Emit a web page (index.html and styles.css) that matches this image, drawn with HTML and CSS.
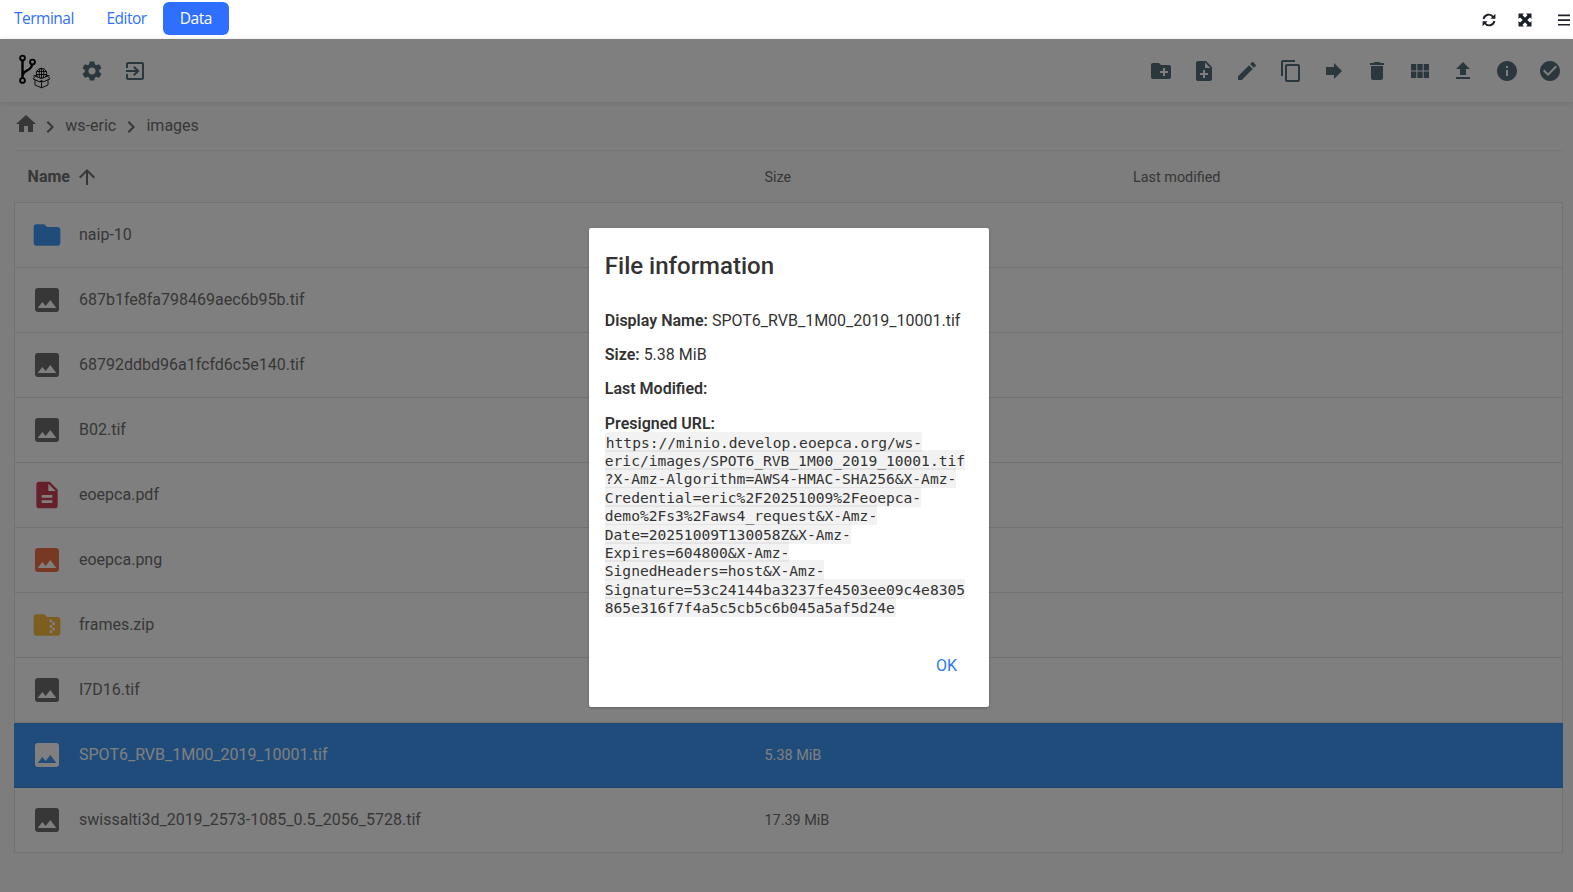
FILE: index.html
```html
<!DOCTYPE html>
<html lang="en">
<head>
<meta charset="utf-8">
<title>Workspace data</title>
<link rel="stylesheet" href="styles.css">
</head>
<body>
<svg class="sprite" aria-hidden="true">
  <symbol id="settings" viewBox="0 0 24 24"><path d="M19.14 12.94c.04-.3.06-.61.06-.94 0-.32-.02-.64-.07-.94l2.03-1.58c.18-.14.23-.41.12-.61l-1.92-3.32c-.12-.22-.37-.29-.59-.22l-2.39.96c-.5-.38-1.03-.7-1.62-.94l-.36-2.54c-.04-.24-.24-.41-.48-.41h-3.84c-.24 0-.43.17-.47.41l-.36 2.54c-.59.24-1.13.57-1.62.94l-2.39-.96c-.22-.08-.47 0-.59.22L2.74 8.87c-.12.21-.08.47.12.61l2.03 1.58c-.05.3-.09.63-.09.94s.02.64.07.94l-2.03 1.58c-.18.14-.23.41-.12.61l1.92 3.32c.12.22.37.29.59.22l2.39-.96c.5.38 1.03.7 1.62.94l.36 2.54c.05.24.24.41.48.41h3.84c.24 0 .44-.17.47-.41l.36-2.54c.59-.24 1.13-.56 1.62-.94l2.39.96c.22.08.47 0 .59-.22l1.92-3.32c.12-.22.07-.47-.12-.61l-2.01-1.58zM12 15.6c-1.98 0-3.6-1.62-3.6-3.6s1.62-3.6 3.6-3.6 3.6 1.62 3.6 3.6-1.62 3.6-3.6 3.6z"/></symbol>
  <symbol id="exit" viewBox="0 0 24 24"><path d="M10.09 15.59L11.5 17l5-5-5-5-1.41 1.41L12.67 11H3v2h9.67l-2.58 2.59zM19 3H5c-1.11 0-2 .9-2 2v4h2V5h14v14H5v-4H3v4c0 1.1.89 2 2 2h14c1.1 0 2-.9 2-2V5c0-1.1-.9-2-2-2z"/></symbol>
  <symbol id="new-folder" viewBox="0 0 24 24"><path d="M20 6h-8l-2-2H4c-1.11 0-1.99.89-1.99 2L2 18c0 1.11.89 2 2 2h16c1.11 0 2-.89 2-2V8c0-1.11-.89-2-2-2zm-1 8h-3v3h-2v-3h-3v-2h3V9h2v3h3v2z"/></symbol>
  <symbol id="note-add" viewBox="0 0 24 24"><path d="M14 2H6c-1.1 0-1.99.9-1.99 2L4 20c0 1.1.89 2 1.99 2H18c1.1 0 2-.9 2-2V8l-6-6zm2 14h-3v3h-2v-3H8v-2h3v-3h2v3h3v2zm-3-7V3.5L18.5 9H13z"/></symbol>
  <symbol id="edit" viewBox="0 0 24 24"><path d="M3 17.25V21h3.75L17.81 9.94l-3.75-3.75L3 17.25zM20.71 7.04c.39-.39.39-1.02 0-1.41l-2.34-2.34c-.39-.39-1.02-.39-1.41 0l-1.83 1.83 3.75 3.75 1.83-1.83z"/></symbol>
  <symbol id="copy" viewBox="0 0 24 24"><path d="M16 1H4c-1.1 0-2 .9-2 2v14h2V3h12V1zm3 4H8c-1.1 0-2 .9-2 2v14c0 1.1.9 2 2 2h11c1.1 0 2-.9 2-2V7c0-1.1-.9-2-2-2zm0 16H8V7h11v14z"/></symbol>
  <symbol id="forward" viewBox="0 0 24 24"><path d="M12 8V4l8 8-8 8v-4H4V8z"/></symbol>
  <symbol id="delete" viewBox="0 0 24 24"><path d="M6 19c0 1.1.9 2 2 2h8c1.1 0 2-.9 2-2V7H6v12zM19 4h-3.5l-1-1h-5l-1 1H5v2h14V4z"/></symbol>
  <symbol id="module" viewBox="0 0 24 24"><path d="M14.67 5v6.5H9.33V5h5.34zm1 6.5H21V5h-5.33v6.5zm-1 7.5v-6.5H9.33V19h5.34zm1-6.5V19H21v-6.5h-5.33zm-7.34 0H3V19h5.33v-6.5zm0-1V5H3v6.5h5.33z"/></symbol>
  <symbol id="upload" viewBox="0 0 24 24"><path d="M5 20h14v-2H5v2zm0-10h4v6h6v-6h4l-7-7-7 7z"/></symbol>
  <symbol id="info" viewBox="0 0 24 24"><path d="M12 2C6.48 2 2 6.48 2 12s4.48 10 10 10 10-4.48 10-10S17.52 2 12 2zm1 15h-2v-6h2v6zm0-8h-2V7h2v2z"/></symbol>
  <symbol id="check" viewBox="0 0 24 24"><path d="M12 2C6.48 2 2 6.48 2 12s4.48 10 10 10 10-4.48 10-10S17.52 2 12 2zm-2 15l-5-5 1.41-1.41L10 14.17l7.59-7.59L19 8l-9 9z"/></symbol>
  <symbol id="home" viewBox="0 0 24 24"><path d="M10 20v-6h4v6h5v-8h3L12 3 2 12h3v8z"/></symbol>
  <symbol id="chevron" viewBox="0 0 24 24"><path d="M10 6L8.59 7.41 13.17 12l-4.58 4.59L10 18l6-6z"/></symbol>
  <symbol id="arrow-up" viewBox="0 0 24 24"><path d="M4 12l1.41 1.41L11 7.83V20h2V7.83l5.58 5.59L20 12l-8-8-8 8z"/></symbol>
  <symbol id="folder" viewBox="0 0 24 24"><path d="M10 4H4c-1.1 0-1.99.9-1.99 2L2 18c0 1.1.9 2 2 2h16c1.1 0 2-.9 2-2V8c0-1.1-.9-2-2-2h-8l-2-2z"/></symbol>
  <symbol id="image" viewBox="0 0 24 24"><path d="M21 19V5c0-1.1-.9-2-2-2H5c-1.1 0-2 .9-2 2v14c0 1.1.9 2 2 2h14c1.1 0 2-.9 2-2zM8.500 13.500l2.500 3.010L14.500 12l4.500 6H5l3.500-4.500z"/></symbol>
  <symbol id="doc" viewBox="0 0 24 24"><path d="M14 2H6c-1.1 0-1.99.9-1.99 2L4 20c0 1.1.89 2 1.99 2H18c1.1 0 2-.9 2-2V8l-6-6zm2 16H8v-2h8v2zm0-4H8v-2h8v2zm-3-5V3.5L18.5 9H13z"/></symbol>
  <symbol id="zip" viewBox="0 0 24 24"><path d="M20 6h-8l-2-2H4c-1.1 0-2 .9-2 2v12c0 1.1.9 2 2 2h16c1.1 0 2-.9 2-2V8c0-1.1-.9-2-2-2zm-2 6h-2v2h2v2h-2v2h-2v-2h2v-2h-2v-2h2v-2h-2V8h2v2h2v2z"/></symbol>
</svg>

<nav class="tabs">
  <a class="tab">Terminal</a>
  <a class="tab">Editor</a>
  <a class="tab active">Data</a>
  <div class="tab-tools">
    <svg viewBox="0 0 14 14"><g fill="none" stroke="currentColor" stroke-width="1.9"><path d="M1.6 6A5.3 5.3 0 0 1 11.2 4"/><path d="M12.4 8A5.3 5.3 0 0 1 2.8 10"/></g><path d="M13.4.8v5H8.4zM.6 13.2v-5h5z"/></svg>
    <svg viewBox="0 0 14 14"><path d="M.5.5h5.500L.5 6zM13.500.5V6L8 .5zM.5 13.500V8L6 13.500zM13.500 13.500H8L13.500 8z"/><path d="M2.500 2.500l9 9M11.500 2.500l-9 9" stroke="currentColor" stroke-width="3.200"/></svg>
    <svg class="bars" viewBox="0 0 14 14"><path d="M1 1.500h12v1.700H1zM1 6.200h12v1.700H1zM1 10.900h12v1.700H1z"/></svg>
  </div>
</nav>

<main class="app">
  <header class="toolbar">
    <svg class="logo" viewBox="0 0 34 36">
      <g fill="none" stroke="#000">
        <g stroke-width="1.900"><circle cx="4.500" cy="4" r="2.400"/><circle cx="14.500" cy="8" r="2.400"/><circle cx="4.500" cy="26.500" r="2.400"/></g>
        <path stroke-width="2.400" d="M4.500 6.500v17.500M14 10.500c-.5 7-9 5-9.400 11"/>
        <g stroke-width=".9"><circle cx="23.500" cy="19.500" r="5.200"/><ellipse cx="23.500" cy="19.500" rx="2.300" ry="5.200"/><path d="M18.500 17.500h10M18.300 20.500h10.400M23.500 14v11"/></g>
        <path stroke-width=".9" fill="#fff" d="M17 25.500l6.500 2.500 6.500-2.500v5.500l-6.500 2.800-6.500-2.800z"/>
        <path stroke-width=".9" fill="#fff" d="M17.500 22.200l6 2.400 6-2.400 2.500 2.600-7 3.200-1.500-2-1.500 2-7-3.200z"/>
        <path stroke-width=".9" d="M23.500 27v6.800M15.300 22l4-1M31.700 22l-4-1"/>
      </g>
    </svg>
    <a class="action"><svg><use href="#settings"/></svg></a>
    <a class="action"><svg><use href="#exit"/></svg></a>
    <div class="actions">
      <a class="action"><svg><use href="#new-folder"/></svg></a>
      <a class="action"><svg><use href="#note-add"/></svg></a>
      <a class="action"><svg><use href="#edit"/></svg></a>
      <a class="action"><svg><use href="#copy"/></svg></a>
      <a class="action"><svg><use href="#forward"/></svg></a>
      <a class="action"><svg><use href="#delete"/></svg></a>
      <a class="action"><svg><use href="#module"/></svg></a>
      <a class="action"><svg><use href="#upload"/></svg></a>
      <a class="action"><svg><use href="#info"/></svg></a>
      <a class="action"><svg><use href="#check"/></svg></a>
    </div>
  </header>

  <div class="breadcrumbs">
    <svg class="home"><use href="#home"/></svg>
    <svg><use href="#chevron"/></svg>
    <span>ws-eric</span>
    <svg><use href="#chevron"/></svg>
    <span>images</span>
  </div>

  <div class="columns">
    <div class="name"><b>Name</b><svg><use href="#arrow-up"/></svg></div>
    <div class="col">Size</div>
    <div class="col">Last modified</div>
  </div>

  <div class="listing">
    <div class="item"><svg class="blue"><use href="#folder"/></svg><span class="file">naip-10</span><span></span></div>
    <div class="item"><svg><use href="#image"/></svg><span class="file">687b1fe8fa798469aec6b95b.tif</span><span></span></div>
    <div class="item"><svg><use href="#image"/></svg><span class="file">68792ddbd96a1fcfd6c5e140.tif</span><span></span></div>
    <div class="item"><svg><use href="#image"/></svg><span class="file">B02.tif</span><span></span></div>
    <div class="item"><svg class="red"><use href="#doc"/></svg><span class="file">eoepca.pdf</span><span></span></div>
    <div class="item"><svg class="orange"><use href="#image"/></svg><span class="file">eoepca.png</span><span></span></div>
    <div class="item"><svg class="yellow"><use href="#zip"/></svg><span class="file">frames.zip</span><span></span></div>
    <div class="item"><svg><use href="#image"/></svg><span class="file">I7D16.tif</span><span></span></div>
    <div class="item selected"><svg><use href="#image"/></svg><span class="file">SPOT6_RVB_1M00_2019_10001.tif</span><span>5.38 MiB</span></div>
    <div class="item"><svg><use href="#image"/></svg><span class="file">swissalti3d_2019_2573-1085_0.5_2056_5728.tif</span><span>17.39 MiB</span></div>
  </div>

  <div class="overlay">
    <section class="card">
      <h2>File information</h2>
      <div class="content">
        <p><strong>Display Name:</strong> SPOT6_RVB_1M00_2019_10001.tif</p>
        <p><strong>Size:</strong> 5.38 MiB</p>
        <p><strong>Last Modified:</strong></p>
        <p><strong>Presigned URL:</strong><br><code>https://minio.develop.eoepca.org/ws-<br>eric/images/SPOT6_RVB_1M00_2019_10001.tif<br>?X-Amz-Algorithm=AWS4-HMAC-SHA256&amp;X-Amz-<br>Credential=eric%2F20251009%2Feoepca-<br>demo%2Fs3%2Faws4_request&amp;X-Amz-<br>Date=20251009T130058Z&amp;X-Amz-<br>Expires=604800&amp;X-Amz-<br>SignedHeaders=host&amp;X-Amz-<br>Signature=53c24144ba3237fe4503ee09c4e8305<br>865e316f7f4a5c5cb5c6b045a5af5d24e</code></p>
      </div>
      <div class="card-action"><button>OK</button></div>
    </section>
  </div>
</main>
</body>
</html>
```
FILE: styles.css
```css
* { box-sizing: border-box; }
body {
  margin: 0;
  height: 892px;
  display: flex;
  flex-direction: column;
  overflow: hidden;
  background: #fff;
  font-family: Roboto, sans-serif;
  font-size: 16px;
}
svg { fill: currentColor; flex: none; }
.sprite { position: absolute; width: 0; height: 0; }

/* Workspace tabs */
.tabs {
  flex: none;
  height: 39px;
  display: flex;
  align-items: flex-start;
  padding-top: 2px;
  font-family: "Open Sans", "Noto Sans", sans-serif;
  font-size: 15.5px;
  letter-spacing: -0.5px;
  color: #2f6fff;
}
.tab { height: 33px; line-height: 33px; padding: 0 16.300px; border-radius: 6px; }
.tab:first-child { padding-left: 14px; }
.tab.active { padding: 0 16.800px; background: #2f6fff; color: #fff; }
.tab-tools { margin-left: auto; display: flex; gap: 22px; padding: 10.5px 2px 0 0; color: #1b2028; }
.tab-tools svg { width: 14px; height: 14px; }
.tab-tools .bars { margin-left: 3px; }

/* File manager */
.app { position: relative; flex: 1; background: #fafafa; color: #6f6f6f; }
.toolbar {
  height: 64px;
  display: flex;
  align-items: center;
  padding: 0 1.700px 0 16px;
  background: #fff;
  border-bottom: 1px solid rgba(0, 0, 0, 0.075);
  box-shadow: 0 0 5px rgba(0, 0, 0, 0.1);
  color: #546e7a;
}
.logo { width: 34px; height: 36px; margin: 2px 18.700px 0 1.500px; }
.action { width: 43.200px; height: 43px; display: flex; align-items: center; justify-content: center; }
.action svg { width: 24px; height: 24px; }
.actions { display: flex; margin-left: auto; }

.breadcrumbs {
  height: 48px;
  margin: 0 10px 0 14px;
  display: flex;
  align-items: center;
  border-bottom: 1px solid rgba(0, 0, 0, 0.05);
}
.breadcrumbs svg { width: 24px; height: 24px; }
.breadcrumbs .home { margin: -5px 0 0; }
.breadcrumbs span { padding: 0 3px 2px 3.300px; line-height: 19px; }

.columns, .item { display: grid; align-items: center; }
.columns {
  height: 51px;
  margin: 0 10px 0 14px;
  padding-left: 13.600px;
  grid-template-columns: 736.900px 368.500px 1fr;
  font-size: 14.4px;
}
.columns .name { display: flex; align-items: center; font-size: 16px; }
.columns .name svg { width: 24px; height: 24px; margin-left: 5px; }
.columns .col { padding-top: 2px; }
.listing { margin: 0 10px 0 14px; border: 1px solid rgba(0, 0, 0, 0.1); border-bottom: 0; background: #fff; }
.item {
  height: 65px;
  padding-left: 16px;
  grid-template-columns: 48px 685.500px 1fr;
  border-bottom: 1px solid rgba(0, 0, 0, 0.1);
  font-size: 14.4px;
}
.item svg { width: 32px; height: 32px; }
.item .file { font-size: 16px; padding-bottom: 1px; }
.item.selected { margin: 0 -1px; padding-left: 17px; background: #3e99f6; color: #fff; }
.blue { color: #3e99f6; }
.red { color: #cc4053; }
.orange { color: #ee7148; }
.yellow { color: #f9bc40; }

/* Dialog */
.overlay {
  position: absolute;
  inset: 0;
  background: rgba(0, 0, 0, 0.5);
  display: flex;
  justify-content: center;
  align-items: flex-start;
  padding: 189px 0 0 5px;
}
.card {
  width: 400px;
  height: 479px;
  padding: 24px 16px 0 15.800px;
  background: #fff;
  border-radius: 2px;
  box-shadow: 0 1px 3px rgba(0, 0, 0, 0.24);
  color: #333;
}
.card h2 { margin: 0; font-size: 24px; line-height: 28px; font-weight: 500; }
.content { margin-top: 31.500px; }
.content p { margin: 0 0 16px; line-height: 18.4px; white-space: nowrap; }
.content strong { font-weight: 600; }
.content code {
  padding: 1.500px 1px;
  border-radius: 2px;
  background: rgba(0, 0, 0, 0.05);
  font-family: "DejaVu Sans Mono", monospace;
  font-size: 14.600px;
}
.card-action { display: flex; justify-content: flex-end; padding: 15.200px 16px 0 0; }
.card-action button { border: 0; padding: 8px 0; background: none; color: #2979ed; font: 16px Roboto, sans-serif; }
```
